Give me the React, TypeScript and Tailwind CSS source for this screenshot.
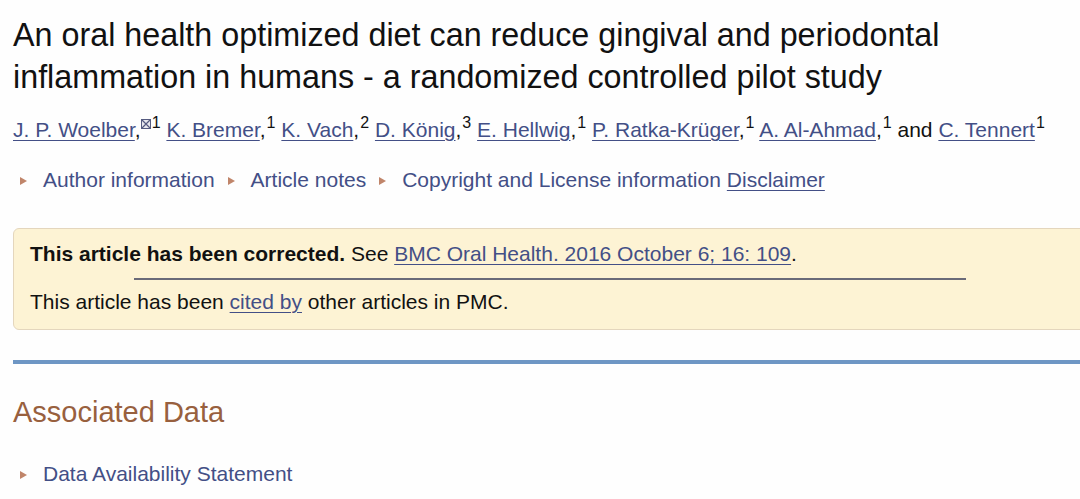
import React from "react";

const Tri = () => (
  <span className="inline-block w-[30px] shrink-0 pl-[7px]">
    <svg width="7" height="8" viewBox="0 0 7 8" className="inline-block">
      <polygon points="0,0 7,4 0,8" fill="#c0856a" />
    </svg>
  </span>
);

const Mail = () => (
  <svg width="10" height="10" viewBox="0 0 10 10" className="inline-block align-top mt-[1px]">
    <rect x="0.5" y="0.5" width="9" height="9" fill="#e8e8ee" stroke="#555b80" strokeWidth="1" />
    <path d="M1 1 L9 9 M9 1 L1 9" stroke="#555b80" strokeWidth="1.2" />
  </svg>
);

const A = ({ children }: { children: React.ReactNode }) => (
  <a className="text-[#434f86] underline underline-offset-[3px] decoration-1">{children}</a>
);

const Sup = ({ children }: { children: React.ReactNode }) => (
  <sup className="text-[16px] text-[#111] top-[-0.55em] pl-[1px]">{children}</sup>
);

export default function App() {
  return (
    <div
      className="w-[1080px] h-[499px] overflow-hidden bg-[#fefefe] pl-[13px] text-[#111]"
      style={{ fontFamily: '"Liberation Sans", Arial, sans-serif' }}
    >
      <h1 className="text-[32.3px] leading-[42px] pt-[14px] text-[#111] font-normal">
        An oral health optimized diet can reduce gingival and periodontal inflammation in humans - a randomized controlled pilot study
      </h1>
      <div className="mt-[20px] text-[21px] leading-[24px] whitespace-nowrap">
        <A>J. P. Woelber</A>,<Mail />
        <Sup>1</Sup> <A>K. Bremer</A>,<Sup>1</Sup> <A>K. Vach</A>,<Sup>2</Sup> <A>D. König</A>,<Sup>3</Sup>{" "}
        <A>E. Hellwig</A>,<Sup>1</Sup> <A>P. Ratka-Krüger</A>,<Sup>1</Sup> <A>A. Al-Ahmad</A>,<Sup>1</Sup> and{" "}
        <A>C. Tennert</A>
        <Sup>1</Sup>
      </div>
      <div className="mt-[26px] flex items-center text-[21px] leading-[24px] text-[#434f86] whitespace-nowrap">
        <Tri />
        <span>Author information</span>
        <span className="w-[6px]" />
        <Tri />
        <span>Article notes</span>
        <span className="w-[6px]" />
        <Tri />
        <span>Copyright and License information</span>
        <span className="ml-[6px]">
          <A>Disclaimer</A>
        </span>
      </div>
      <div className="mt-[36px] w-[1100px] h-[102px] rounded-[6px] border border-[#e4d6bd] bg-[#fdf3d4] pl-[16px] pt-[13px] text-[21px] leading-[24px]">
        <div>
          <b className="font-bold">This article has been corrected.</b> See <A>BMC Oral Health. 2016 October 6; 16: 109</A>.
        </div>
        <div className="ml-[104px] mt-[12px] w-[832px] h-[2px] bg-[#6a6a78]" />
        <div className="mt-[10px]">
          This article has been <A>cited by</A> other articles in PMC.
        </div>
      </div>
      <div className="mt-[30px] h-[4px] bg-[#6e96c4]" />
      <h2 className="mt-[31px] text-[29px] leading-[34px] text-[#98603e] font-normal">Associated Data</h2>
      <div className="mt-[33px] flex items-center text-[21px] leading-[24px] text-[#434f86]">
        <Tri />
        <span>Data Availability Statement</span>
      </div>
    </div>
  );
}
